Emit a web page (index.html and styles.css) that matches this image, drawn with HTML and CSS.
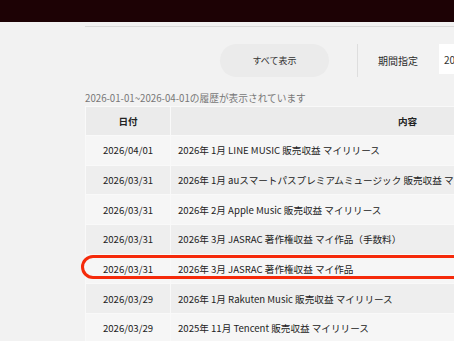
FILE: index.html
```html
<!DOCTYPE html>
<html lang="ja">
<head>
<meta charset="utf-8">
<title>履歴</title>
<link rel="stylesheet" href="styles.css">
</head>
<body>
<header class="topbar"></header>
<main class="content">
  <div class="rule"></div>
  <div class="toolbar">
    <button class="btn-all" type="button">すべて表示</button>
    <span class="divider"></span>
    <span class="label">期間指定</span>
    <div class="date-input">2026-01-01</div>
  </div>
  <p class="caption">2026-01-01~2026-04-01の履歴が表示されています</p>
  <div class="table-wrap">
    <table class="history">
      <thead>
        <tr><th class="col-date">日付</th><th class="col-body">内容</th></tr>
      </thead>
      <tbody>
        <tr><td class="col-date">2026/04/01</td><td class="col-body">2026年 1月 LINE MUSIC 販売収益 マイリリース</td></tr>
        <tr><td class="col-date">2026/03/31</td><td class="col-body">2026年 1月 auスマートパスプレミアムミュージック 販売収益 マイリリース</td></tr>
        <tr><td class="col-date">2026/03/31</td><td class="col-body">2026年 2月 Apple Music 販売収益 マイリリース</td></tr>
        <tr><td class="col-date">2026/03/31</td><td class="col-body">2026年 3月 JASRAC 著作権収益 マイ作品（手数料）</td></tr>
        <tr><td class="col-date">2026/03/31</td><td class="col-body">2026年 3月 JASRAC 著作権収益 マイ作品</td></tr>
        <tr><td class="col-date">2026/03/29</td><td class="col-body">2026年 1月 Rakuten Music 販売収益 マイリリース</td></tr>
        <tr><td class="col-date">2026/03/29</td><td class="col-body">2025年 11月 Tencent 販売収益 マイリリース</td></tr>
      </tbody>
    </table>
    <div class="highlight"></div>
  </div>
</main>
</body>
</html>
```
FILE: styles.css
```css
html, body {
  margin: 0;
  padding: 0;
}
body {
  background: #f2f2f2;
  font-family: "Noto Sans CJK JP", "Noto Sans", sans-serif;
  color: #222;
  overflow: hidden;
  width: 454px;
  height: 341px;
}
.topbar {
  height: 22px;
  background: #1d0205;
}
.content {
  margin-left: 85px;
  width: 580px;
  padding-top: 4px;
}
.rule {
  height: 1px;
  background: #d9d9d9;
}
.toolbar {
  display: flex;
  align-items: flex-start;
  margin-top: 17px;
  padding-left: 135px;
}
.btn-all {
  width: 109px;
  height: 33px;
  border: none;
  border-radius: 17px;
  background: #ebebeb;
  color: #333;
  font-family: inherit;
  font-size: 9px;
  padding: 0;
}
.divider {
  width: 1px;
  height: 33px;
  background: #dedede;
  margin-left: 28px;
}
.label {
  margin-left: 20px;
  height: 33px;
  line-height: 33px;
  font-size: 10px;
  color: #2b2b2b;
}
.date-input {
  margin-left: 21px;
  width: 120px;
  height: 30px;
  line-height: 31px;
  background: #fff;
  padding-left: 5px;
  font-size: 10px;
  color: #333;
}
.caption {
  margin: 14px 0 1px;
  font-size: 9.7px;
  line-height: 14px;
  color: #777;
}
.table-wrap {
  position: relative;
}
.history {
  width: 560px;
  border-collapse: collapse;
  font-size: 9.6px;
}
.history th,
.history td {
  border: 1px solid #f9f9f9;
  padding: 0;
}
.history th {
  height: 28px;
  background: #ebebeb;
  font-weight: bold;
  text-align: center;
}
.history td {
  height: 28.7px;
}
.history tbody tr:nth-child(odd) {
  background: #f6f6f6;
}
.history tbody tr:nth-child(even) {
  background: #eeeeee;
}
.history .col-date {
  width: 84px;
  text-align: center;
}
.history td.col-body {
  padding-left: 7px;
  white-space: nowrap;
}
.highlight {
  position: absolute;
  left: -4px;
  top: 149px;
  width: 600px;
  height: 24px;
  box-sizing: border-box;
  border: 3px solid #f52a0a;
  border-radius: 12px;
}
```
